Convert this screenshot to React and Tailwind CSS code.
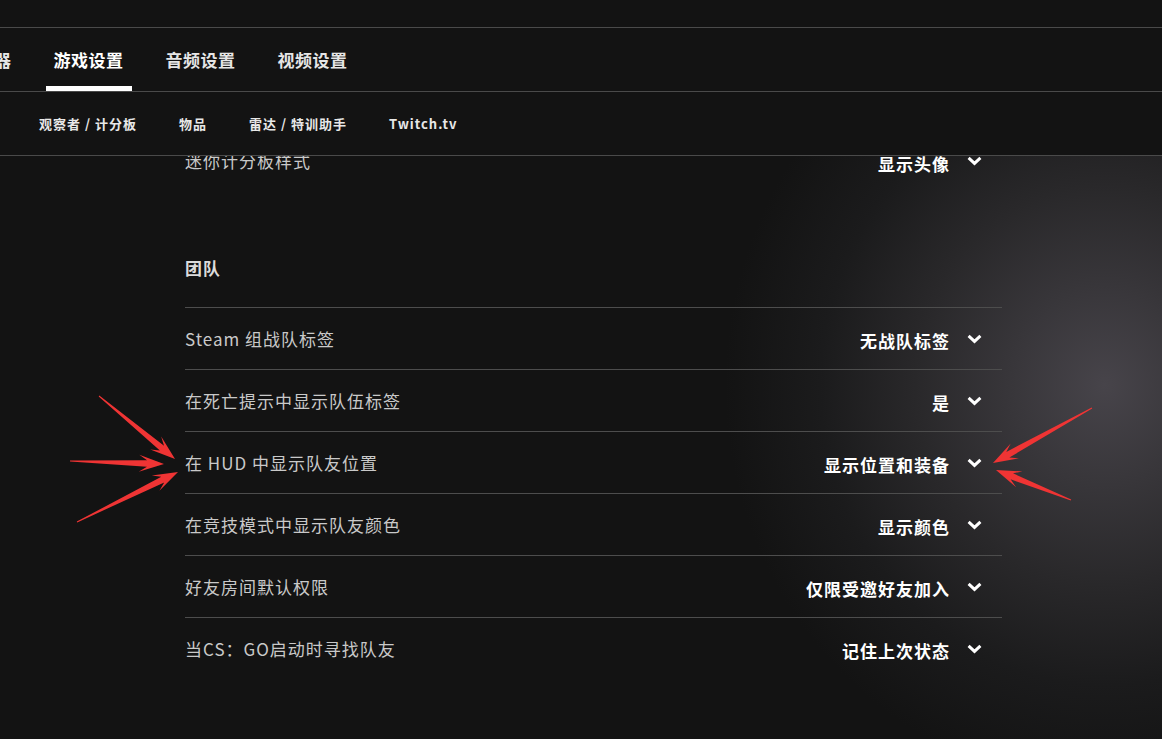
import React from "react";

const FONT = { fontFamily: '"Noto Sans CJK SC", "Noto Sans", sans-serif' };

function Chevron() {
  return (
    <svg width="15" height="10" viewBox="0 0 15 10" className="shrink-0">
      <polyline points="1.6,1.8 7.5,7.4 13.4,1.8" fill="none" stroke="#ffffff" strokeWidth="3" strokeLinecap="butt" strokeLinejoin="miter" />
    </svg>
  );
}

function arrowPoints(tx, ty, px, py) {
  const dx = px - tx;
  const dy = py - ty;
  const L = Math.hypot(dx, dy);
  const ux = dx / L;
  const uy = dy / L;
  const nx = -uy;
  const ny = ux;
  const headLen = 25;
  const notch = 17;
  const headW = 8.5;
  const shaftW = 3.2;
  const tailW = 0.5;
  const pt = (d, w) => [px - ux * d + nx * w, py - uy * d + ny * w];
  const pts = [
    [tx + nx * tailW, ty + ny * tailW],
    pt(notch, shaftW),
    pt(headLen, headW),
    [px, py],
    pt(headLen, -headW),
    pt(notch, -shaftW),
    [tx - nx * tailW, ty - ny * tailW],
  ];
  return pts.map((p) => p[0].toFixed(1) + "," + p[1].toFixed(1)).join(" ");
}

const arrows = [
  [99, 396, 175, 459],
  [70, 461, 164, 464],
  [77, 522, 178, 472],
  [1092, 408, 993, 463],
  [1071, 500, 996, 470],
];

const rows = [
  ["Steam 组战队标签", "无战队标签"],
  ["在死亡提示中显示队伍标签", "是"],
  ["在 HUD 中显示队友位置", "显示位置和装备"],
  ["在竞技模式中显示队友颜色", "显示颜色"],
  ["好友房间默认权限", "仅限受邀好友加入"],
  ["当CS：GO启动时寻找队友", "记住上次状态"],
];

function Row({ label, value, border }) {
  return (
    <div className={"flex h-[62px] items-center justify-between pr-[20px] " + (border ? "border-t border-[#4d4d4d]" : "")}>
      <span className="text-[17px] tracking-[1px] text-[#c9c9c9]">{label}</span>
      <div className="flex items-center gap-[17px]">
        <span className="pt-[5px] text-[17px] font-bold tracking-[1px] text-white">{value}</span>
        <Chevron />
      </div>
    </div>
  );
}

export default function App() {
  return (
    <div
      className="relative flex h-[739px] w-[1162px] flex-col overflow-hidden bg-[#121212] bg-[radial-gradient(ellipse_380px_400px_at_1105px_385px,#47444a_0%,#38363a_25%,#29282a_50%,#1b1b1c_75%,#131313_100%)]"
      style={FONT}
    >
      {/* Header */}
      <div className="shrink-0 bg-[#131313]">
        <div className="h-[28px] border-b border-[#4a4a4a]" />
        <div className="flex h-[64px] items-stretch gap-[26px] border-b border-[#4a4a4a]">
          <div className="relative ml-[-49px] flex items-center px-2">
            <span className="text-[17px] font-bold tracking-[0.5px] text-[#e6e6e6]">控制器</span>
          </div>
          <div className="relative flex items-center px-2">
            <span className="text-[17px] font-bold tracking-[0.5px] text-white">游戏设置</span>
            <div className="absolute bottom-0 left-0 right-0 h-[5px] bg-white" />
          </div>
          <div className="relative flex items-center px-2">
            <span className="text-[17px] font-bold tracking-[0.5px] text-[#e6e6e6]">音频设置</span>
          </div>
          <div className="relative flex items-center px-2">
            <span className="text-[17px] font-bold tracking-[0.5px] text-[#e6e6e6]">视频设置</span>
          </div>
        </div>
        <div className="flex h-[64px] items-center gap-[42px] border-b border-[#4a4a4a] pl-[39px] text-[13px] font-bold tracking-[1px] text-[#e8e8e8]">
          <span>观察者 / 计分板</span>
          <span>物品</span>
          <span>雷达 / 特训助手</span>
          <span>Twitch.tv</span>
        </div>
      </div>

      {/* Content */}
      <div className="min-h-0 flex-1 overflow-hidden">
        <div className="ml-[185px] mt-[-26px] w-[817px]">
          <Row label="迷你计分板样式" value="显示头像" border={false} />
          <div className="pb-[27px] pt-[64px]">
            <span className="block text-[17px] font-bold leading-[24px] tracking-[1px] text-[#dcdcdc]">团队</span>
          </div>
          {rows.map(([l, v], i) => (
            <Row key={i} label={l} value={v} border={true} />
          ))}
        </div>
      </div>

      {/* Annotation arrows */}
      <svg className="pointer-events-none absolute left-0 top-0" width="1162" height="739" viewBox="0 0 1162 739">
        {arrows.map((a, i) => (
          <polygon key={i} points={arrowPoints(a[0], a[1], a[2], a[3])} fill="#ef3434" />
        ))}
      </svg>
    </div>
  );
}
